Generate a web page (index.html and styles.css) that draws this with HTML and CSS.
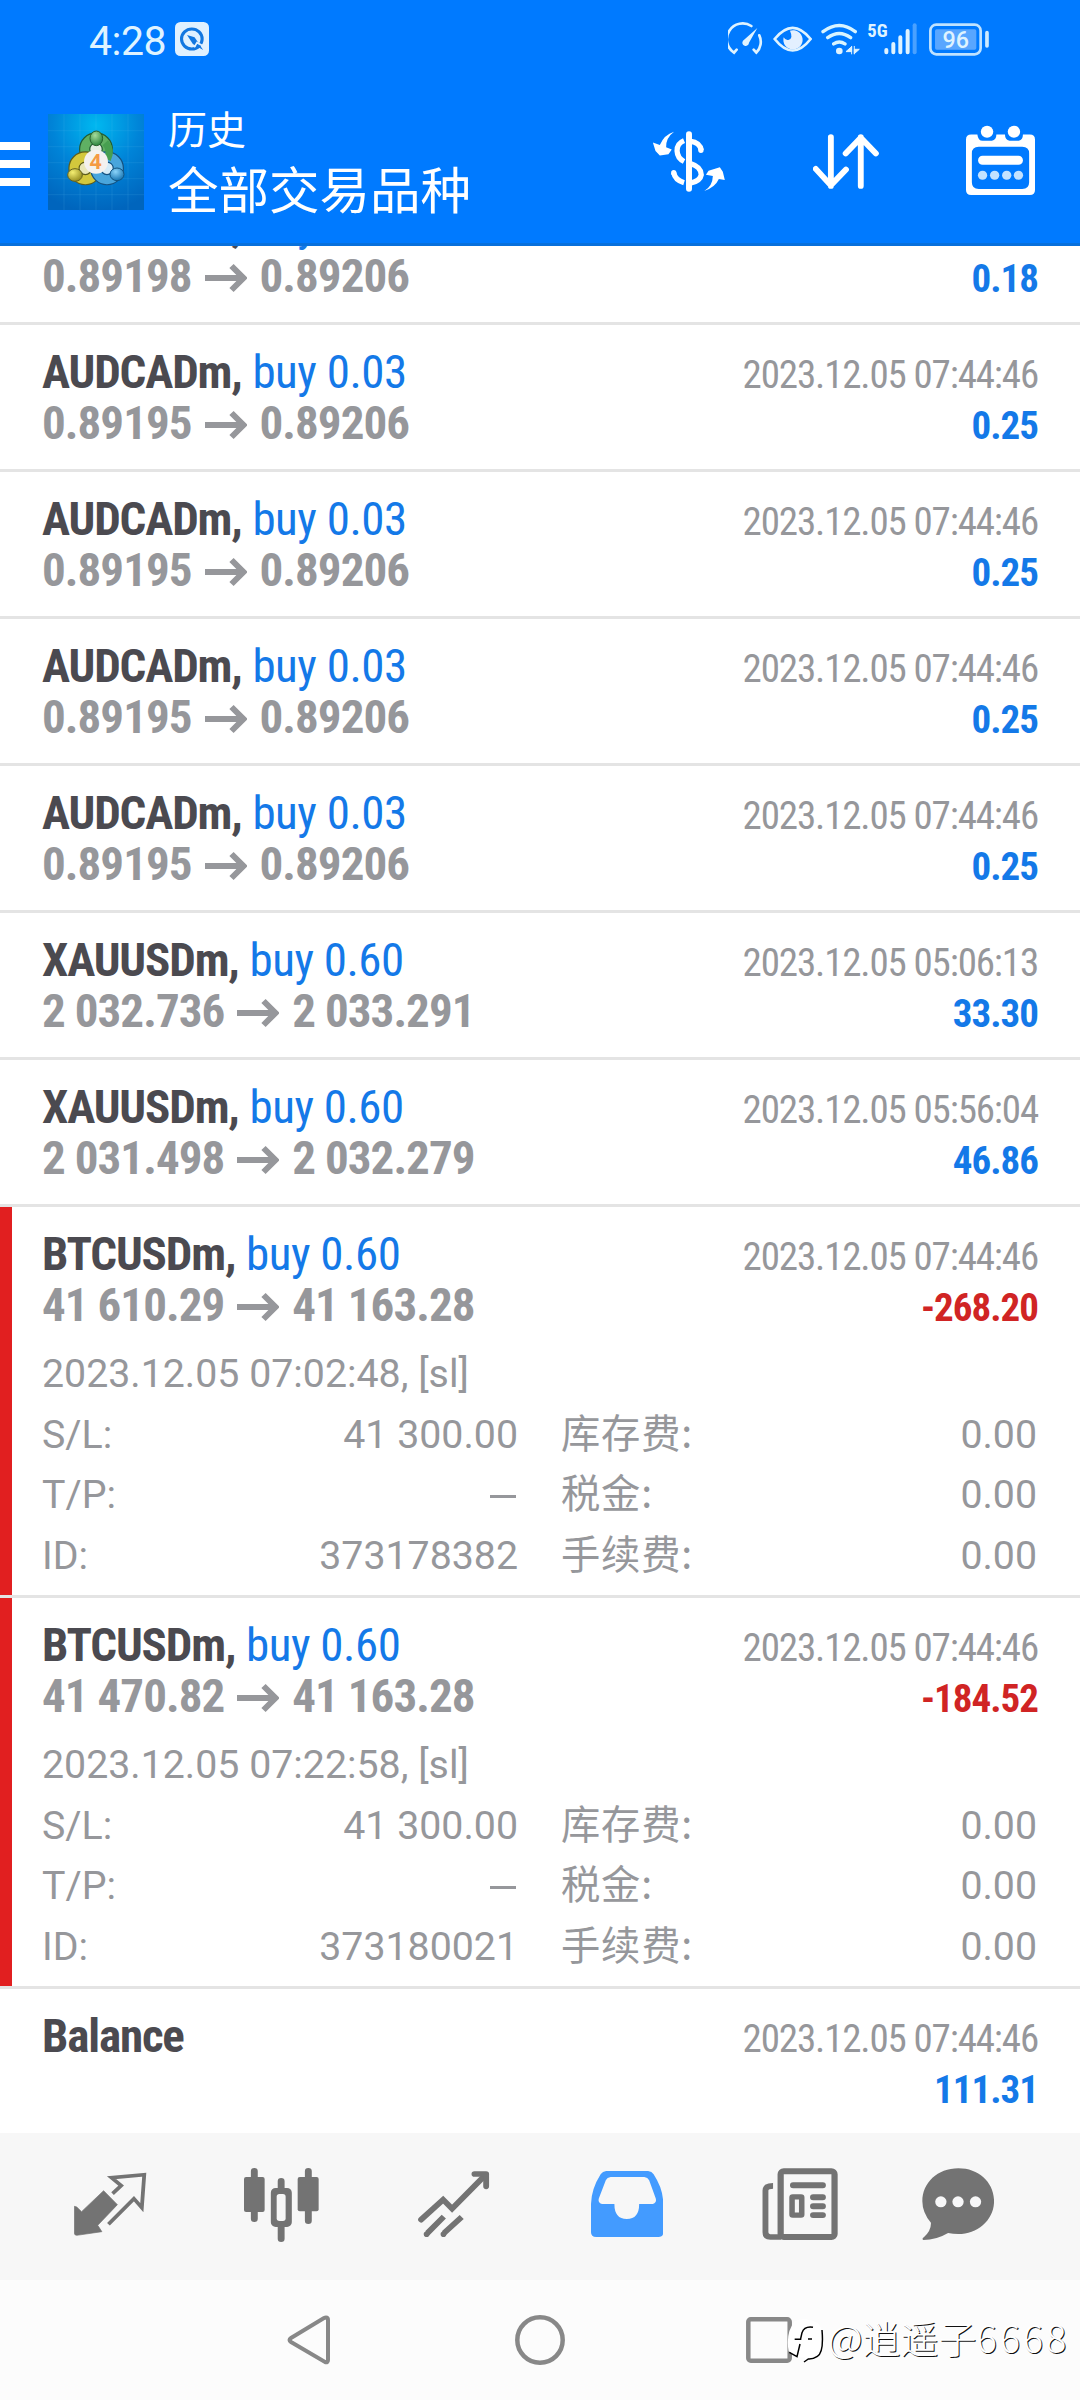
FILE: index.html
```html
<!DOCTYPE html>
<html lang="zh-CN">
<head>
<meta charset="utf-8">
<title>历史</title>
<link rel="stylesheet" href="styles.css">
</head>
<body>
<svg class="defs" aria-hidden="true">
  <symbol id="arrow" viewBox="0 0 42 30"><path d="M0 15H38M26.500 3L38.500 15L26.500 27" fill="none" stroke="#96979b" stroke-width="6"/></symbol>
</svg>
<div class="screen">
  <header class="header">
    <div class="status">
      <span class="clock">4:28</span>
      <svg class="status-app" viewBox="508 66 99 102" preserveAspectRatio="none"><rect x="508" y="66" width="99" height="102" rx="16" fill="#e0f1ff"/><circle cx="557" cy="117" r="30" fill="none" stroke="#1277e0" stroke-width="9"/><path d="M543 105L565 112L590 150L560 132Z" fill="#1277e0"/><path d="M564 142L572 128L590 138" fill="none" stroke="#e0f1ff" stroke-width="5"/></svg>
      <div class="status-icons">
        <svg width="35" height="38.300" viewBox="25 30 105 115"><g fill="none" stroke="#dff3ff" stroke-width="8" stroke-linecap="round"><path d="M95 48A46 46 0 0 0 43 128L51 119M119 76A46 46 0 0 1 110 128L102 119"/></g><path d="M113 54L88 98A10 10 0 1 1 70 92Z" fill="#dff3ff"/></svg>
        <svg width="39.300" height="38.300" viewBox="160 30 118 115"><path d="M165 87Q219 20 273 87Q219 156 165 87Z" fill="none" stroke="#dff3ff" stroke-width="8"/><path d="M211 62A29 29 0 1 1 192 82Q198 92 206 90Q222 86 211 62Z" fill="#e3f0ff"/></svg>
        <svg width="38.300" height="38.300" viewBox="305 30 115 115"><g fill="none" stroke="#d8f4ff" stroke-width="10" stroke-linecap="round"><path d="M311 65Q360 28 408 65M325 83Q360 58 394 83M343 102Q360 90 377 102"/></g><circle cx="360" cy="123" r="10" fill="#dff3ff"/><path d="M397 108V133M380 125L397 110V125ZM405 108V133M420 118L405 131V118Z" stroke="#dff3ff" stroke-width="3" fill="#dff3ff"/></svg>
        <svg width="50" height="38.300" viewBox="443 30 150 115"><text x="444" y="82" class="net">5G</text><g stroke="#dff3ff" stroke-width="12" stroke-linecap="round"><path d="M501 120V127M522 102V127M543 82V127M565 63V127"/><path d="M586 46V127" stroke="#4aa1ff"/></g></svg>
        <svg width="60" height="38.300" viewBox="628 30 180 115"><rect x="632" y="44" width="151" height="89" rx="18" fill="none" stroke="#bfe2ff" stroke-width="8"/><rect x="646" y="58" width="124" height="61" rx="5" fill="#59a6ff"/><text x="708" y="115" class="batt" text-anchor="middle">96</text><path d="M802 68V108" stroke="#cdeaff" stroke-width="11" stroke-linecap="round"/></svg>
      </div>
    </div>
    <div class="appbar">
      <div class="menu"><i></i><i></i><i></i></div>
      <svg class="app-icon" viewBox="24 24 288 288">
        <defs>
          <radialGradient id="bg" cx=".5" cy=".12" r=".9"><stop offset="0" stop-color="#00b8f0"/><stop offset=".5" stop-color="#0084d8"/><stop offset="1" stop-color="#0065bd"/></radialGradient>
          <radialGradient id="gr" cx=".4" cy=".3" r=".8"><stop offset="0" stop-color="#a6dc9c"/><stop offset="1" stop-color="#1c7a30"/></radialGradient>
          <radialGradient id="ye" cx=".35" cy=".3" r=".8"><stop offset="0" stop-color="#f4ee72"/><stop offset="1" stop-color="#8d8418"/></radialGradient>
          <radialGradient id="bl" cx=".4" cy=".3" r=".8"><stop offset="0" stop-color="#8bd4fa"/><stop offset="1" stop-color="#0868a8"/></radialGradient>
        </defs>
        <path fill="url(#bg)" d="M24 24H312V312H24Z"/>
        <path d="M24 74H312M24 122H312M24 170H312M24 218H312M24 266H312M72 24V312M120 24V312M168 24V312M216 24V312M264 24V312" stroke="#5fc3f3" stroke-opacity=".22" stroke-width="2"/>
        <circle cx="168" cy="130" r="34" fill="#e4efe0" stroke="#225c33" stroke-width="34"/><circle cx="168" cy="130" r="34" fill="none" stroke="#5fb063" stroke-width="27"/>
        <circle cx="136" cy="187" r="34" fill="#e9e7b8" stroke="#5d5d1c" stroke-width="34"/><circle cx="136" cy="187" r="34" fill="none" stroke="#d3c83c" stroke-width="27"/>
        <circle cx="201" cy="187" r="34" fill="#d5ebf8" stroke="#155281" stroke-width="34"/><circle cx="201" cy="187" r="34" fill="none" stroke="#49a5dc" stroke-width="27"/>
        <path d="M196 110Q216 132 202 160" fill="none" stroke="#479f50" stroke-width="22"/>
        <ellipse cx="169" cy="97" rx="19" ry="22" fill="url(#gr)" stroke="#285f2d" stroke-width="3"/>
        <ellipse cx="105" cy="207" rx="22" ry="19" fill="url(#ye)" stroke="#66631f" stroke-width="3"/>
        <ellipse cx="231" cy="205" rx="21" ry="19" fill="url(#bl)" stroke="#125380" stroke-width="3"/>
        <circle cx="168" cy="167" r="36" fill="#f4f1ef"/>
        <text x="167" y="190" text-anchor="middle" class="four">4</text>
      </svg>
      <div class="titles"><div class="title-small">历史</div><div class="title-large">全部交易品种</div></div>
      <div class="actions">
        <svg class="ic-money" viewBox="40 64 220 184"><g fill="none" stroke="#fff" stroke-width="16"><path d="M187 122A34 32 0 0 0 156 95M135 93Q113 102 114 124Q115 146 135 156M156 163Q186 172 187 196Q184 214 156 221M135 220Q108 212 104 190" stroke-linecap="butt"/><path d="M150 74V238" stroke-width="18" stroke-linecap="round"/><path d="M186 121V122M104 190V191" stroke-linecap="round"/></g><path fill="#fff" d="M105 66Q80 84 81 113L98 120L88 134L62 138L49 124L41 99L62 106Q75 75 105 66ZM196 245Q221 231 222 200L201 196L209 184L243 173L252 187L258 212L240 209Q229 234 196 245Z"/></svg>
        <svg class="ic-sort" viewBox="793 404 192 164" preserveAspectRatio="none"><path d="M845 413V559M801 508L845 557L889 510M932 559V413M888 462L932 415L976 462" fill="none" stroke="#fff" stroke-width="17" stroke-linecap="round" stroke-linejoin="round"/></svg>
        <svg class="ic-cal" viewBox="1237 376 200 209" preserveAspectRatio="none"><path fill="#fff" fill-rule="evenodd" d="M1252 404H1270Q1272 423 1285 423H1312Q1325 420 1325 404H1350Q1350 420 1363 423H1390Q1402 420 1402 404H1422Q1437 404 1437 419V570Q1437 585 1422 585H1252Q1237 585 1237 570V419Q1237 404 1252 404ZM1274 441Q1254 441 1254 461V547Q1254 567 1274 567H1400Q1420 567 1420 547V461Q1420 441 1400 441Z"/><circle cx="1298" cy="396" r="18" fill="#fff"/><circle cx="1376" cy="396" r="18" fill="#fff"/><rect x="1272" y="468" width="130" height="27" rx="13" fill="#fff"/><g fill="#c3e2ff"><circle cx="1285" cy="526" r="13.500"/><circle cx="1320" cy="526" r="13.500"/><circle cx="1355" cy="526" r="13.500"/><circle cx="1389" cy="526" r="13.500"/></g></svg>
      </div>
    </div>
  </header>

  <main class="list">
    <section class="deal clipped">
      <div class="line"><span><b class="sym">AUDCADm,</b> <span class="side">buy 0.02</span></span></div>
      <div class="line"><span class="price">0.89198 <svg class="arr"><use href="#arrow"/></svg> 0.89206</span><b class="profit">0.18</b></div>
    </section>
    <section class="deal">
      <div class="line"><span><b class="sym">AUDCADm,</b> <span class="side">buy 0.03</span></span><span class="time">2023.12.05 07:44:46</span></div>
      <div class="line"><span class="price">0.89195 <svg class="arr"><use href="#arrow"/></svg> 0.89206</span><b class="profit">0.25</b></div>
    </section>
    <section class="deal">
      <div class="line"><span><b class="sym">AUDCADm,</b> <span class="side">buy 0.03</span></span><span class="time">2023.12.05 07:44:46</span></div>
      <div class="line"><span class="price">0.89195 <svg class="arr"><use href="#arrow"/></svg> 0.89206</span><b class="profit">0.25</b></div>
    </section>
    <section class="deal">
      <div class="line"><span><b class="sym">AUDCADm,</b> <span class="side">buy 0.03</span></span><span class="time">2023.12.05 07:44:46</span></div>
      <div class="line"><span class="price">0.89195 <svg class="arr"><use href="#arrow"/></svg> 0.89206</span><b class="profit">0.25</b></div>
    </section>
    <section class="deal">
      <div class="line"><span><b class="sym">AUDCADm,</b> <span class="side">buy 0.03</span></span><span class="time">2023.12.05 07:44:46</span></div>
      <div class="line"><span class="price">0.89195 <svg class="arr"><use href="#arrow"/></svg> 0.89206</span><b class="profit">0.25</b></div>
    </section>
    <section class="deal">
      <div class="line"><span><b class="sym">XAUUSDm,</b> <span class="side">buy 0.60</span></span><span class="time">2023.12.05 05:06:13</span></div>
      <div class="line"><span class="price">2 032.736 <svg class="arr"><use href="#arrow"/></svg> 2 033.291</span><b class="profit">33.30</b></div>
    </section>
    <section class="deal">
      <div class="line"><span><b class="sym">XAUUSDm,</b> <span class="side">buy 0.60</span></span><span class="time">2023.12.05 05:56:04</span></div>
      <div class="line"><span class="price">2 031.498 <svg class="arr"><use href="#arrow"/></svg> 2 032.279</span><b class="profit">46.86</b></div>
    </section>
    <section class="deal stopped">
      <div class="line"><span><b class="sym">BTCUSDm,</b> <span class="side">buy 0.60</span></span><span class="time">2023.12.05 07:44:46</span></div>
      <div class="line"><span class="price">41 610.29 <svg class="arr"><use href="#arrow"/></svg> 41 163.28</span><b class="profit loss">-268.20</b></div>
      <div class="details">
        <div class="opened">2023.12.05 07:02:48, [sl]</div>
        <div class="pair"><span>S/L:</span><span>41 300.00</span></div><div class="pair"><span class="cn">库存费:</span><span>0.00</span></div>
        <div class="pair"><span>T/P:</span><span class="dash"></span></div><div class="pair"><span class="cn">税金:</span><span>0.00</span></div>
        <div class="pair"><span>ID:</span><span>373178382</span></div><div class="pair"><span class="cn">手续费:</span><span>0.00</span></div>
      </div>
    </section>
    <section class="deal stopped">
      <div class="line"><span><b class="sym">BTCUSDm,</b> <span class="side">buy 0.60</span></span><span class="time">2023.12.05 07:44:46</span></div>
      <div class="line"><span class="price">41 470.82 <svg class="arr"><use href="#arrow"/></svg> 41 163.28</span><b class="profit loss">-184.52</b></div>
      <div class="details">
        <div class="opened">2023.12.05 07:22:58, [sl]</div>
        <div class="pair"><span>S/L:</span><span>41 300.00</span></div><div class="pair"><span class="cn">库存费:</span><span>0.00</span></div>
        <div class="pair"><span>T/P:</span><span class="dash"></span></div><div class="pair"><span class="cn">税金:</span><span>0.00</span></div>
        <div class="pair"><span>ID:</span><span>373180021</span></div><div class="pair"><span class="cn">手续费:</span><span>0.00</span></div>
      </div>
    </section>
    <section class="deal last">
      <div class="line"><b class="sym">Balance</b><span class="time">2023.12.05 07:44:46</span></div>
      <div class="line"><span>&nbsp;</span><b class="profit">111.31</b></div>
    </section>
  </main>

  <nav class="tabs">
    <svg width="73" height="64" viewBox="214 163 212 192" preserveAspectRatio="none"><path d="M300 219L340 261L283 323L295 342L222 353Q215 353 215 346V266L222 268L236 282Z" fill="#737373" stroke="#737373" stroke-width="2" stroke-linejoin="round"/><path d="M326 228L351 204L323 180L418 171L411 270L388 243L314 320" fill="none" stroke="#737373" stroke-width="11"/></svg>
    <svg width="75" height="74.300" viewBox="709 147 218 223" preserveAspectRatio="none"><g stroke="#737373" stroke-width="20" stroke-linecap="round"><path d="M739 157V299M817 187V215M817 315V359M896 157V305"/></g><rect x="709" y="174" width="60" height="105" rx="6" fill="#737373"/><rect x="865" y="174" width="61" height="103" rx="6" fill="#737373"/><rect x="796" y="216" width="43" height="99" rx="5" fill="#f7f7f7" stroke="#737373" stroke-width="18"/><rect x="799" y="219" width="37" height="93" fill="#737373"/><rect x="804" y="225" width="26" height="81" rx="8" fill="#f7f7f7"/></svg>
    <svg width="71.600" height="66.300" viewBox="1213 155 208 199" preserveAspectRatio="none"><g fill="none" stroke="#737373" stroke-width="17"><path d="M1222 301L1286 241L1312 268L1408 168" stroke-linecap="round"/><path d="M1377 164H1411V201" stroke-linecap="round" stroke-linejoin="round"/><path d="M1288 292L1240 342M1340 293L1288 342"/><path d="M1238 345H1238.100M1287 345H1287.100" stroke-linecap="round"/></g></svg>
    <svg width="72.600" height="66" viewBox="146 156 211 198" preserveAspectRatio="none"><path fill="#439bff" fill-rule="evenodd" d="M190 156H312Q323 157 328 166Q356 210 356 255V340Q356 354 342 354H161Q146 354 146 340V255Q147 210 174 166Q180 157 190 156ZM203 174Q193 175 189 184L169 238Q165 252 178 255H214Q214 300 250 300Q286 300 286 255H325Q338 252 334 238L315 184Q311 175 301 174Z"/></svg>
    <svg width="76" height="72" viewBox="645 146 220 217" preserveAspectRatio="none"><g fill="none" stroke="#737373"><rect x="699" y="156" width="156" height="198" rx="9" stroke-width="18"/><path d="M677 200Q655 200 655 214V340Q655 354 669 354H700" stroke-width="17"/><path d="M735 198H821M793 234H821M793 261H821M793 288H821" stroke-width="18" stroke-linecap="round"/><rect x="732" y="233" width="28" height="55" rx="2" stroke-width="16"/></g></svg>
    <svg width="72.400" height="72.300" viewBox="1108 146 211 218" preserveAspectRatio="none"><path fill="#737373" d="M1214 147C1275 147 1318 191 1318 246C1318 302 1270 345 1214 345Q1198 345 1184 342Q1150 363 1112 363Q1106 360 1114 354Q1135 334 1134 311Q1109 280 1109 246C1109 191 1153 147 1214 147Z"/><g fill="#f7f7f8"><circle cx="1163" cy="248" r="16.500"/><circle cx="1213" cy="248" r="16.500"/><circle cx="1264" cy="248" r="16.500"/></g></svg>
  </nav>
  <footer class="sysnav">
    <svg width="43" height="50" viewBox="0 0 43 50"><path d="M39 2.500Q41 2.500 41 5V45Q41 48 38 47L4 27Q1 25 4 23L37 3Q38 2.500 39 2.500Z" fill="none" stroke="#888" stroke-width="4"/></svg>
    <svg width="50" height="50" viewBox="0 0 50 50"><circle cx="25" cy="25" r="22.700" fill="none" stroke="#888" stroke-width="4.500"/></svg>
    <svg width="46" height="46" viewBox="0 0 46 46"><rect x="2.300" y="2.300" width="41.400" height="41.400" rx="2.500" fill="none" stroke="#888" stroke-width="4.500"/></svg>
    <div class="watermark">
      <svg width="38" height="46" viewBox="138 26 114 138"><path d="M165 34Q200 22 234 42Q250 60 248 100Q246 146 205 150L190 160L196 144L172 144L146 126Q136 70 165 34Z" fill="#fff"/><path d="M246 62Q252 130 232 141Q218 150 205 149L192 158M219 54Q193 50 186 70L182 88M164 90H184M204 89H216M180 104L171 142L148 129" fill="none" stroke="#000" stroke-width="4.500"/></svg>
      <span class="handle">@逍遥子<span class="digits">6668</span></span>
    </div>
  </footer>
</div>
</body>
</html>
```
FILE: styles.css
```css
* { box-sizing: border-box; }
body { margin: 0; background: #fff; font-family: Roboto, "Noto Sans CJK SC", sans-serif; }
svg { display: block; flex: none; }
.defs { position: absolute; width: 0; height: 0; }
.screen { width: 1080px; height: 2400px; display: flex; flex-direction: column; overflow: hidden; }

.header { height: 246px; flex: none; background: #007aff; border-bottom: 3px solid #0870dc; color: #fff; }
.status { height: 78px; display: flex; align-items: flex-start; padding: 20px 85px 0 89px; }
.clock { width: 86px; font-size: 41px; line-height: 43px; color: #dff3ff; letter-spacing: -.5px; }
.status-app { width: 34px; height: 34px; margin-top: 2px; }
.status-icons { display: flex; margin-left: 519px; }
.status-icons svg + svg { margin-left: 9.5px; }
.status-icons svg:nth-child(4) { margin-left: 7.700px; }
.status-icons svg:nth-child(5) { margin-left: 11.700px; }
.net { font: 700 56px "Roboto Condensed"; fill: #dff3ff; }
.batt { font: 500 70px Roboto; fill: #dff3ff; }

.appbar { height: 168px; display: flex; align-items: center; }
.menu { width: 30px; display: flex; flex-direction: column; gap: 10px; margin-top: 4px; }
.menu i { height: 8px; background: #fff; }
.app-icon { width: 96px; height: 96px; margin-left: 18px; }
.four { font: 700 62px "Noto Sans"; fill: #f59a45; }
.titles { width: 484px; margin: -5px 0 0 24px; font-family: "Noto Sans CJK SC", sans-serif; }
.title-small { font-size: 39px; line-height: 54px; }
.title-large { font-size: 50.500px; line-height: 66px; }
.actions { display: flex; align-items: center; margin-top: -1px; }
.ic-money { width: 74px; height: 61px; margin-top: -1px; }
.ic-sort { width: 66px; height: 55px; margin-left: 87px; }
.ic-cal { width: 69px; height: 70px; margin-left: 87px; margin-top: -3px; }

.list { height: 1887px; flex: none; overflow: hidden; }
.deal { height: 147px; padding: 20.500px 42px 0 42px; border-bottom: 3px solid #e4e4e4; }
.clipped { margin-top: -68px; }
.last { border-bottom: 0; }
.line { height: 51px; line-height: 51px; display: flex; justify-content: space-between; align-items: baseline; white-space: nowrap; font-family: "Roboto Condensed", sans-serif; font-size: 47px; }
.sym { color: #4b4a50; letter-spacing: -1.150px; }
.side { color: #1479e8; letter-spacing: -.500px; }
.time { font-size: 39px; color: #96979b; letter-spacing: -1.150px; }
.price { font-weight: 700; color: #96979b; letter-spacing: -.930px; }
.arr { display: inline-block; width: 42px; height: 30px; margin: 0 3px; vertical-align: -1px; }
.profit { font-size: 39px; color: #1479e8; letter-spacing: -1px; }
.loss { color: #d02424; }

.stopped { height: 391px; background: linear-gradient(90deg, #e11f20 12px, transparent 12px) padding-box; }
.details { margin-top: 14.500px; display: grid; grid-template-columns: 476px 476px; column-gap: 44px; grid-auto-rows: 60.600px; line-height: 60.600px; font-size: 39.300px; color: #96979b; }
.opened { grid-column: 1 / 3; }
.pair { display: flex; justify-content: space-between; }
.pair:nth-child(odd) { margin-left: -1px; width: 476px; }
.cn { font-family: "Noto Sans CJK SC", sans-serif; letter-spacing: .800px; margin-top: -4px; }
.dash { width: 26px; height: 3px; margin: 30px 2px 0 0; background: #96979b; }

.tabs { height: 147px; flex: none; background: #f7f7f7; display: grid; grid-template-columns: 170px 174px 172.500px 171.700px 159.500px 80px; align-items: center; padding-left: 74px; }
.tabs svg { margin-top: -5px; }
.tabs svg:nth-child(2) { margin-top: -2px; }
.sysnav { height: 120px; flex: none; background: #fcfcfc; display: flex; align-items: center; padding-left: 287px; position: relative; }
.sysnav > svg:nth-child(2) { margin-left: 185px; }
.sysnav > svg:nth-child(3) { margin-left: 181px; }
.watermark { position: absolute; left: 786px; top: 31px; display: flex; align-items: center; gap: 4px; height: 60px; }
.handle { margin-top: -9px; font-family: "Noto Sans CJK SC", sans-serif; font-size: 38px; font-weight: 300; line-height: 60px; color: #fff; text-shadow: 1px 1px 0 #111; white-space: nowrap; }
.digits { letter-spacing: 2.800px; }
```
